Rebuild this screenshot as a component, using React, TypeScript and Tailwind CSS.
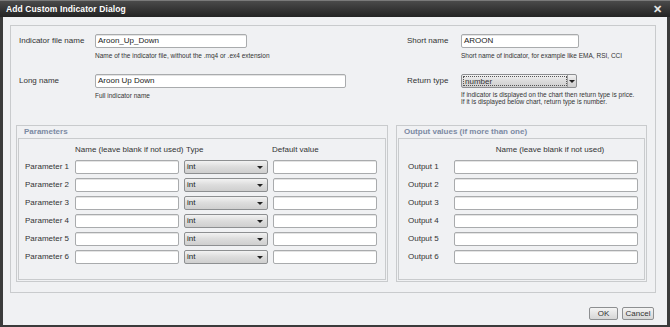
import React from 'react';

const font = { fontFamily: '"Liberation Sans", Arial, sans-serif' };

function TextBox({ value = '', className = '' }: { value?: string; className?: string }) {
    return (
        <div className={`h-[14px] rounded-[2px] border border-[#a9abad] bg-white px-[2px] text-[8px] leading-[12px] text-[#222] shadow-[inset_0_1px_0_#e4e4e4] ${className}`}>
            {value}
        </div>
    );
}

function TypeSelect({ value = 'int', className = '' }: { value?: string; className?: string }) {
    return (
        <div className={`relative flex h-[14px] items-center rounded-[2px] border border-[#8d8f91] bg-gradient-to-b from-[#f2f2f2] via-[#dcdcdc] to-[#cfcfcf] pl-[2px] text-[8px] text-[#222] ${className}`}>
            <span className="leading-none">{value}</span>
            <span className="absolute right-[4px] top-[5px] h-0 w-0 border-x-[3px] border-t-[3px] border-x-transparent border-t-[#222]" />
        </div>
    );
}

export default function App() {
    const params = [1, 2, 3, 4, 5, 6];

    return (
        <div className="flex h-[327px] w-[670px] flex-col bg-[#3b3b3b] text-[#333]" style={font}>
            {/* title bar */}
            <div className="flex h-[17px] items-center justify-between border-t border-[#7a7a7a] bg-gradient-to-b from-[#4a4a4a] to-[#242424] pl-[6px] pr-[8px]">
                <span className="text-[8.5px] font-bold tracking-[0.1px] text-white">Add Custom Indicator Dialog</span>
                <span className="text-[11px] font-bold leading-none text-[#e6e6e6]">✕</span>
            </div>

            {/* body */}
            <div className="mx-[3px] mb-[2px] flex flex-1 flex-col bg-[#f0f1f3]">
                <div className="ml-[7px] mt-[8px] h-[268px] w-[646px] border border-[#c9cbcd] pl-[5px]">
                    {/* top fields */}
                    <div className="flex pt-[8px]">
                        <div className="w-[391px] pl-[3px]">
                            <div className="flex items-center">
                                <span className="w-[76px] text-[8px]">Indicator file name</span>
                                <TextBox value="Aroon_Up_Down" className="w-[152px]" />
                            </div>
                            <div className="ml-[76px] mt-[4px] text-[6.5px] leading-[8px]">Name of the indicator file, without the .mq4 or .ex4 extension</div>
                            <div className="mt-[14px] flex items-center">
                                <span className="w-[76px] text-[8px]">Long name</span>
                                <TextBox value="Aroon Up Down" className="w-[251px]" />
                            </div>
                            <div className="ml-[76px] mt-[4px] text-[6.5px] leading-[8px]">Full indicator name</div>
                        </div>
                        <div className="flex-1">
                            <div className="flex items-center">
                                <span className="w-[54px] text-[8px]">Short name</span>
                                <TextBox value="AROON" className="w-[118px]" />
                            </div>
                            <div className="ml-[54px] mt-[4px] text-[6.5px] leading-[8px]">Short name of indicator, for example like EMA, RSI, CCI</div>
                            <div className="mt-[14px] flex items-center">
                                <span className="w-[54px] text-[8px]">Return type</span>
                                <div className="flex h-[14px] w-[116px] items-center rounded-[2px] border border-[#8d8f91] bg-gradient-to-b from-[#f2f2f2] via-[#dcdcdc] to-[#cfcfcf] text-[8px]">
                                    <span className="ml-[1px] h-[10px] w-[104px] border border-dotted border-[#555] pl-[1px] leading-[9px]">number</span>
                                    <span className="flex h-full flex-1 items-center justify-center border-l border-[#a0a0a0]">
                                        <span className="h-0 w-0 border-x-[3px] border-t-[3px] border-x-transparent border-t-[#222]" />
                                    </span>
                                </div>
                            </div>
                            <div className="ml-[54px] mt-[3px] text-[6.5px] leading-[7px]">
                                If indicator is displayed on the chart then return type is price.
                                <br />
                                If it is displayed below chart, return type is number.
                            </div>
                        </div>
                    </div>

                    {/* groups */}
                    <div className="mt-[20px] flex gap-[8px]">
                        <div className="h-[157px] w-[372px] border border-[#c9cbcd] px-[1px]">
                            <div className="h-[12px] pl-[6px] text-[8px] font-bold leading-[12px] text-[#7c8aa3]">Parameters</div>
                            <div className="h-[142px] border border-[#c9cbcd] pl-[6px]">
                                <div className="flex h-[21px] items-center text-[8px]">
                                    <span className="ml-[50px] w-[111px]">Name (leave blank if not used)</span>
                                    <span className="w-[86px]">Type</span>
                                    <span>Default value</span>
                                </div>
                                <div className="flex flex-col gap-[4px]">
                                    {params.map((n) => (
                                        <div key={n} className="flex items-center">
                                            <span className="w-[50px] text-[8px]">Parameter {n}</span>
                                            <TextBox className="w-[104px]" />
                                            <TypeSelect className="ml-[5px] w-[84px]" />
                                            <TextBox className="ml-[5px] w-[104px]" />
                                        </div>
                                    ))}
                                </div>
                            </div>
                        </div>

                        <div className="h-[157px] w-[251px] border border-[#c9cbcd] px-[1px]">
                            <div className="h-[12px] pl-[6px] text-[8px] font-bold leading-[12px] text-[#7c8aa3]">Output values (if more than one)</div>
                            <div className="h-[142px] border border-[#c9cbcd] pl-[9px]">
                                <div className="flex h-[21px] items-center text-[8px]">
                                    <span className="ml-[50px] w-[184px] text-center">Name (leave blank if not used)</span>
                                </div>
                                <div className="flex flex-col gap-[4px]">
                                    {params.map((n) => (
                                        <div key={n} className="flex items-center">
                                            <span className="w-[46px] text-[8px]">Output {n}</span>
                                            <TextBox className="w-[184px]" />
                                        </div>
                                    ))}
                                </div>
                            </div>
                        </div>
                    </div>
                </div>

                {/* buttons */}
                <div className="mt-[14px] flex justify-end gap-[4px] pr-[13px]">
                    <button className="h-[13px] w-[29px] rounded-[2px] border border-[#8d8f91] bg-gradient-to-b from-[#f4f4f4] to-[#d6d6d6] text-[8px] leading-none">OK</button>
                    <button className="h-[13px] w-[32px] rounded-[2px] border border-[#8d8f91] bg-gradient-to-b from-[#f4f4f4] to-[#d6d6d6] text-[8px] leading-none">Cancel</button>
                </div>
            </div>
        </div>
    );
}
